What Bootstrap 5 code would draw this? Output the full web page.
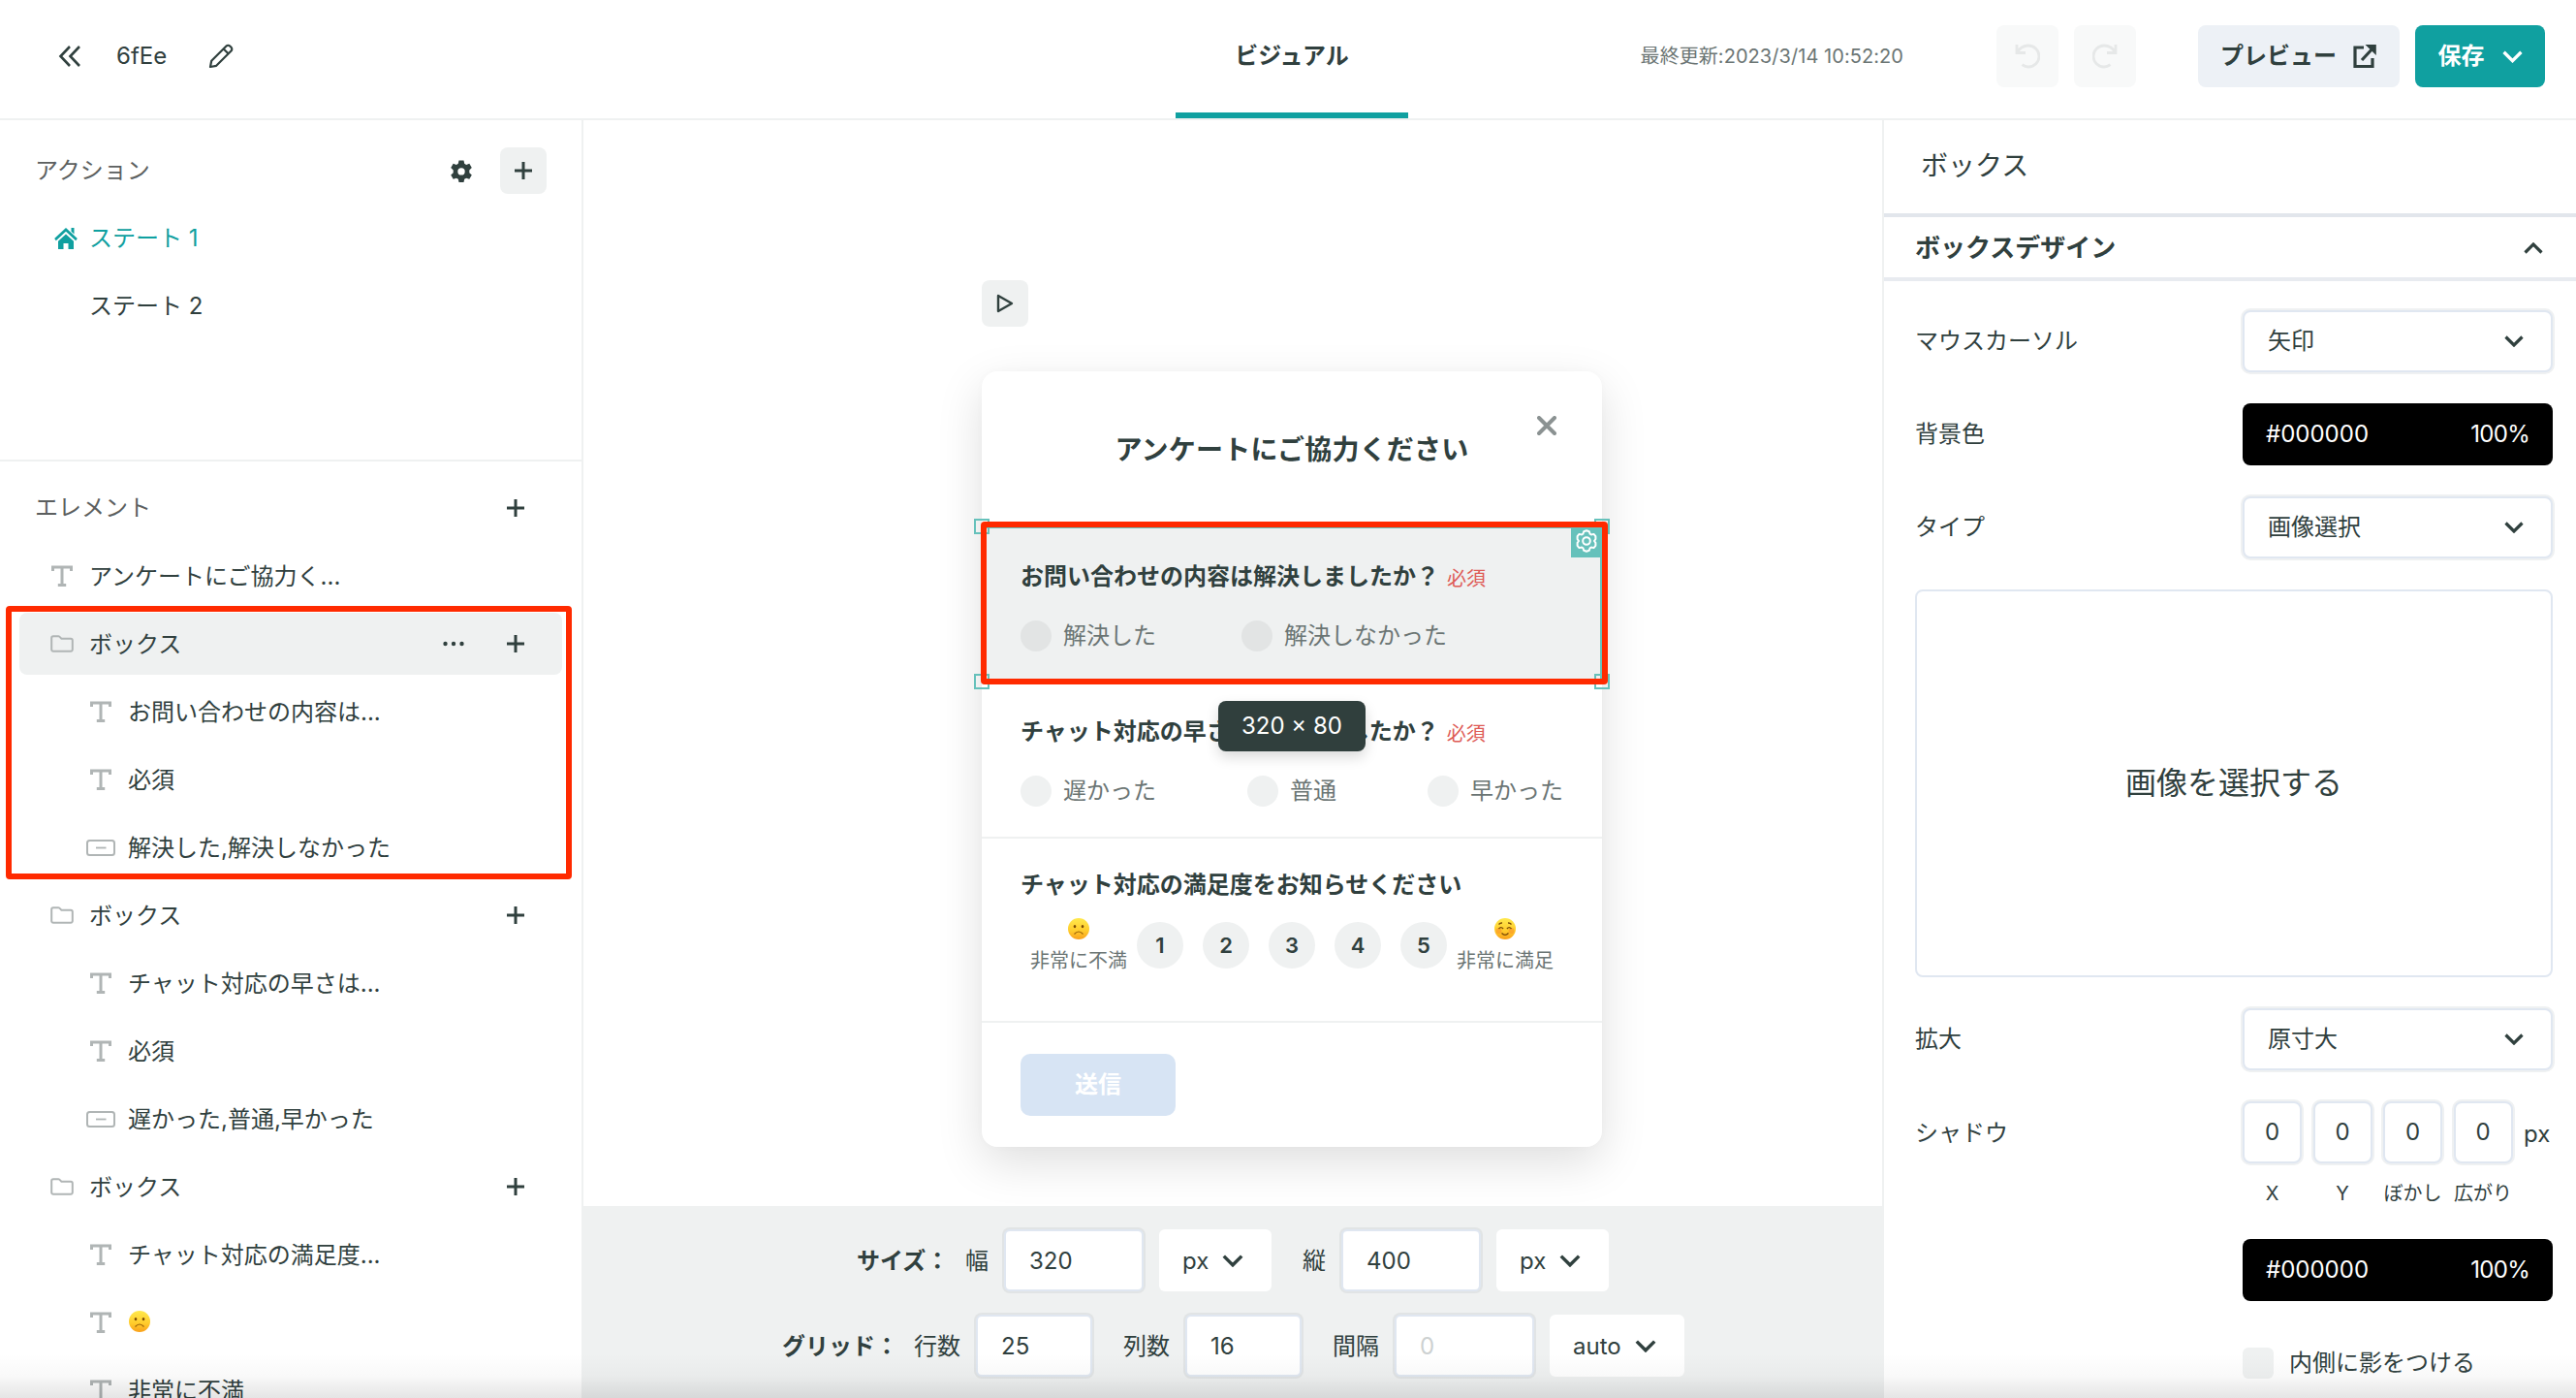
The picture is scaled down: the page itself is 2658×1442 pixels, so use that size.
<!DOCTYPE html>
<html lang="ja">
<head>
<meta charset="utf-8">
<title>ビジュアル</title>
<link href="https://cdn.jsdelivr.net/npm/bootstrap@5.3.0/dist/css/bootstrap.min.css" rel="stylesheet">
<style>
:root{--ink:#30403e;--teal:#10a0a0;--mist:#eff1f1;--sel:#66c1bb;--redline:#ff2a00}
html,body{height:100%}
body{font-family:Inter,"Noto Sans CJK JP",sans-serif;font-size:24px;line-height:36px;color:var(--ink);background:#fff;overflow:hidden}
svg{display:block;flex:none;fill:none;stroke:currentColor}
.app{width:2658px;height:1442px}
.topbar{height:124px;border-bottom:2px solid var(--mist)}
.top-side{width:1213px;height:122px;padding:0 32px 7px 60px}
.tab-on{width:240px;height:122px;padding-bottom:1px;border-bottom:6px solid var(--teal)}
.top-right{height:116px}
.stamp{font-size:20px;color:#6b7574;letter-spacing:.06px}
.sq64{width:64px;height:64px;border-radius:8px;background:#f8f9f9;color:#e6e8e8}
.bt{height:64px;border-radius:8px;border:0;font-size:24px;font-weight:700;padding:0}
.bt-prev,.bt-prev:hover{width:208px;background:#edf1f6;color:var(--ink)}
.bt-save,.bt-save:hover{width:134px;background:var(--teal);color:#fff}
.left{width:602px;border-right:2px solid var(--mist)}
.actions{height:352px;border-bottom:2px solid var(--mist);padding-top:28px}
.hd{height:48px;padding:0 36px 0 36px;color:#5c5f5f}
.sq48{width:48px;height:48px;border-radius:8px;background:var(--mist);color:var(--ink)}
.item{height:64px;margin:0 20px 6px;border-radius:8px;padding:0 39px 0 28px}
.item.on{background:var(--mist)}
.item.sub{padding-left:68px}
.item .ic{width:32px;margin-right:12px;color:#b0b5b5}
.item .tx{position:static;padding-top:1px}
.item.st .tx{padding-top:2px}
.redbox{position:absolute;border:6px solid var(--redline);border-radius:4px;z-index:5}
.rb1{left:6px;top:501px;width:584px;height:282px}
.stage{padding-left:411px;padding-top:165px;height:1120px}
.panelcard{width:640px;height:800px;margin-top:46px;border-radius:16px;background:#fff;box-shadow:0 16px 48px rgba(0,0,0,.13),0 0 8px rgba(0,0,0,.02)}
.pc-title{height:160px;font-size:28px;font-weight:700;letter-spacing:.2px;padding-top:2px}
.pc-sec{padding:0 40px}
.q{font-weight:700;height:36px}
.req{font-size:20px;color:#de5b56;margin-left:8px;padding-top:2px;font-weight:400}
.opt{color:#6b7574;gap:12px;height:36px}
.opt span+span{margin-top:-1px}
.dot{width:32px;height:32px;border-radius:50%;background:var(--mist);flex:none}
.selbox{height:160px;background:var(--mist);border:2px solid var(--sel);position:relative;padding:32px 38px 0}
.selbox .dot{background:#e2e4e4}
.hnd{position:absolute;width:16px;height:16px;border:2px solid var(--sel)}
.gearb{position:absolute;right:-2px;top:-2px;width:32px;height:32px;padding-bottom:2px;background:var(--sel);color:#fff}
.tip{position:absolute;left:244px;top:340px;width:152px;height:52px;border-radius:8px;background:#303f3d;color:#fff;box-shadow:0 6px 14px rgba(0,0,0,.15);z-index:6}
.num{width:48px;height:48px;border-radius:50%;background:var(--mist);font-weight:600;font-size:22px}
.face{width:100px;font-size:20px;line-height:30px;color:#6b7574}
.send{width:160px;height:64px;border-radius:10px;background:#d7e4f4;color:#fff;font-weight:700}
.bottom{background:var(--mist);height:198px;padding-top:24px;gap:24px}
.bl{height:64px}
.bl>b,.bl>.cap{padding-top:1px}
.fld{height:64px;border:2px solid #e0e7f1;border-radius:6px;background:#fff;box-shadow:0 0 0 2px #e1e4e5;padding-left:24px;padding-top:1px}
.pick{height:64px;border-radius:6px;background:#fff;padding-left:24px;padding-top:1px;gap:14px}
.right{width:716px;border-left:2px solid var(--mist)}
.r-title{height:96px;padding:0 0 2px 38px;font-size:28px}
.r-sec{height:70px;border-top:4px solid #e2e6ec;border-bottom:4px solid #e8ebf0;padding:1px 34px 0 32px;font-size:26px;font-weight:700}
.r-body{padding:30px 24px 0 32px;gap:32px}
.r-row{min-height:64px}
.r-row .lb{width:338px;height:64px}
.fx{width:320px}
.rbx{border:2px solid #e0e7f1;border-radius:8px;height:64px;box-shadow:0 0 0 2px #eff1f2;background:#fff}
.blk{height:64px;border-radius:8px;background:#000;color:#fff;padding:0 24px}
.pct{letter-spacing:-.7px}
.drop{height:400px;border:2px solid #e0e7f1;border-radius:8px;font-size:32px}
.n4{width:61px}
.sm{font-size:20px;line-height:30px}
.chk{width:32px;height:32px;border-radius:6px;background:var(--mist)}
.shade{position:absolute;left:0;right:0;bottom:0;height:46px;background:linear-gradient(to bottom,rgba(0,0,0,0),rgba(0,0,0,.025) 50%,rgba(0,0,0,.1));z-index:9}
</style>
</head>
<body>
<svg width="0" height="0" class="position-absolute">
<defs>
<symbol id="tt" viewBox="0 0 22 22"><path d="M1.500 6V2h19v4M11 2v18M6.800 20.400h8.400" stroke-width="3" fill="none"/></symbol>
<symbol id="fo" viewBox="0 0 24 18"><path d="M1.200 3a1.800 1.800 0 0 1 1.800-1.800h5.200c.7 0 1 .3 1.400.7l1.800 1.800h9.600A1.800 1.800 0 0 1 22.800 5.500V15a1.800 1.800 0 0 1-1.800 1.800H3A1.800 1.800 0 0 1 1.200 15z" stroke-width="2" fill="none"/></symbol>
<symbol id="inp" viewBox="0 0 30 17"><rect x="1" y="1" width="28" height="15" rx="2.500" stroke-width="2" fill="none"/><path d="M10 8.500h10.500" stroke-width="1.800"/></symbol>
<symbol id="pl" viewBox="0 0 18 18"><path d="M9 0v18M0 9h18" stroke-width="3"/></symbol>
<symbol id="dn" viewBox="0 0 20 12"><path d="M1.500 1.500L10 10l8.500-8.500" stroke-width="3.200" fill="none"/></symbol>
<symbol id="sad" viewBox="0 0 22 22"><circle cx="11" cy="11" r="11" fill="url(#yg)" stroke="none"/><ellipse cx="7" cy="8.600" rx="1.300" ry="1.700" fill="#7a4a06" stroke="none"/><ellipse cx="15" cy="8.600" rx="1.300" ry="1.700" fill="#7a4a06" stroke="none"/><path d="M6.500 16.500q4.500-5 9 0" stroke="#9a6208" stroke-width="1.200" fill="none"/></symbol>
<symbol id="hap" viewBox="0 0 22 22"><circle cx="11" cy="11" r="11" fill="url(#yg)" stroke="none"/><circle cx="4.500" cy="13" r="3" fill="#f98a2b" opacity=".5" stroke="none"/><circle cx="17.500" cy="13" r="3" fill="#f98a2b" opacity=".5" stroke="none"/><path d="M4.500 11q2.300-2.800 4.600 0M12.900 11q2.300-2.800 4.600 0M7.500 15.500q3.500 3.600 7 0M4.500 6.500q1.500-1.700 3.500-1.500M17.500 6.500q-1.500-1.700-3.500-1.500" stroke="#7a4a06" stroke-width="1.300" fill="none"/></symbol>
<linearGradient id="yg" x1="0" y1="0" x2="0" y2="1"><stop offset="0" stop-color="#ffe94d"/><stop offset=".6" stop-color="#ffcb2b"/><stop offset="1" stop-color="#f9a01b"/></linearGradient>
</defs>
</svg>

<div class="app d-flex flex-column position-relative">
  <header class="topbar d-flex">
    <div class="top-side d-flex align-items-center">
      <svg width="24" height="24" viewBox="0 0 24 24" stroke-width="2.600"><path d="M12 2L2.500 12 12 22M22 2l-9.500 10L22 22"/></svg>
      <span style="margin-left:36px">6fEe</span>
      <svg width="26" height="26" viewBox="0 0 26 26" stroke-width="2.200" stroke-linejoin="round" style="margin-left:43px"><path d="M2 24l1.200-6.200L18.500 2.500a2.600 2.600 0 0 1 3.700 0l1.300 1.300a2.600 2.600 0 0 1 0 3.700L8.200 22.800zM15.700 5.500l4.800 4.800"/></svg>
    </div>
    <div class="tab-on d-flex align-items-center justify-content-center fw-bold">ビジュアル</div>
    <div class="top-right d-flex align-items-center flex-grow-1 justify-content-end" style="padding-right:32px">
      <span class="stamp">最終更新:2023/3/14 10:52:20</span>
      <div class="sq64 d-flex align-items-center justify-content-center" style="margin-left:96px"><svg width="26" height="26" viewBox="0 0 26 26" stroke-width="2.800"><path d="M2 1v8.500h9M2.500 9C5 4.500 9.500 2 14 2a10.800 10.800 0 0 1 0 22c-2.600 0-4.600-.8-6.500-2.300"/></svg></div>
      <div class="sq64 d-flex align-items-center justify-content-center ms-3"><svg width="26" height="26" viewBox="0 0 26 26" stroke-width="2.800"><path d="M24 1v8.500h-9M23.500 9C21 4.500 16.500 2 12 2a10.800 10.800 0 0 0 0 22c2.600 0 4.600-.8 6.500-2.300"/></svg></div>
      <button class="btn bt bt-prev d-flex align-items-center justify-content-center" style="margin-left:64px;gap:16px">プレビュー<svg width="26" height="26" viewBox="0 0 26 26" stroke-width="3.200"><path d="M12 4H3v19.500h18V15M10 17L23 3"/><path d="M15.500 1.800H24V10z" fill="currentColor" stroke-width="1.600"/></svg></button>
      <button class="btn bt bt-save d-flex align-items-center justify-content-center ms-3" style="gap:18px">保存<svg width="21" height="13"><use href="#dn"/></svg></button>
    </div>
  </header>

  <div class="d-flex flex-grow-1">
    <aside class="left position-relative overflow-hidden flex-shrink-0">
      <section class="actions">
        <div class="hd d-flex align-items-center"><span class="me-auto">アクション</span>
          <svg width="24" height="24" viewBox="0 0 24 24" style="margin:2px 28px 0 0;color:#30403e"><path fill="currentColor" stroke="none" fill-rule="evenodd" d="M9.500.5h5l.7 3.300 1.900 1.100 3.200-1.100 2.500 4.300-2.500 2.300v2.800l2.500 2.300-2.500 4.300-3.200-1.100-1.900 1.100-.7 3.300h-5l-.7-3.300-1.900-1.100-3.200 1.100L1.200 15.500l2.500-2.300v-2.800L1.200 8.100l2.500-4.300 3.200 1.100 1.900-1.100zM12 8.200a3.700 3.700 0 1 0 0 7.400 3.700 3.700 0 0 0 0-7.400z"/></svg>
          <span class="sq48 d-flex align-items-center justify-content-center"><svg width="18" height="18"><use href="#pl"/></svg></span></div>
        <div class="item st d-flex align-items-center" style="margin-top:13px;color:#10a0a0"><span class="ic d-flex justify-content-center" style="color:inherit;padding-left:8px"><svg width="24" height="22" viewBox="0 0 24 20" preserveAspectRatio="none" style="margin-top:2px"><path d="M1 11L12 1.800 23 11" stroke-width="2.600"/><path d="M17.500 0h3v6l-3-2.500zM12 5.800l8 6.700V20h-5.500v-5.500h-5V20H4v-7.500z" fill="currentColor" stroke="none"/></svg></span><span class="tx">ステート 1</span></div>
        <div class="item st d-flex align-items-center"><span class="ic"></span><span class="tx">ステート 2</span></div>
      </section>
      <section>
        <div class="hd d-flex align-items-center" style="margin-top:24px;padding-right:59px"><span class="me-auto">エレメント</span><svg width="18" height="18" style="color:#30403e"><use href="#pl"/></svg></div>
        <div class="item d-flex align-items-center" style="margin-top:14px"><span class="ic d-flex justify-content-center"><svg width="22" height="22"><use href="#tt"/></svg></span><span class="tx">アンケートにご協力く...</span></div>

        <div class="item on d-flex align-items-center"><span class="ic d-flex justify-content-center"><svg width="24" height="18"><use href="#fo"/></svg></span><span class="tx me-auto">ボックス</span><svg width="22" height="6" viewBox="0 0 22 6" style="margin-right:44px"><g fill="#30403e" stroke="none"><circle cx="2.500" cy="3" r="2.200"/><circle cx="11" cy="3" r="2.200"/><circle cx="19.500" cy="3" r="2.200"/></g></svg><svg width="18" height="18"><use href="#pl"/></svg></div>
        <div class="item sub d-flex align-items-center"><span class="ic d-flex justify-content-center"><svg width="22" height="22"><use href="#tt"/></svg></span><span class="tx">お問い合わせの内容は...</span></div>
        <div class="item sub d-flex align-items-center"><span class="ic d-flex justify-content-center"><svg width="22" height="22"><use href="#tt"/></svg></span><span class="tx">必須</span></div>
        <div class="item sub d-flex align-items-center"><span class="ic d-flex justify-content-center"><svg width="30" height="17"><use href="#inp"/></svg></span><span class="tx">解決した,解決しなかった</span></div>

        <div class="item d-flex align-items-center"><span class="ic d-flex justify-content-center"><svg width="24" height="18"><use href="#fo"/></svg></span><span class="tx me-auto">ボックス</span><svg width="18" height="18"><use href="#pl"/></svg></div>
        <div class="item sub d-flex align-items-center"><span class="ic d-flex justify-content-center"><svg width="22" height="22"><use href="#tt"/></svg></span><span class="tx">チャット対応の早さは...</span></div>
        <div class="item sub d-flex align-items-center"><span class="ic d-flex justify-content-center"><svg width="22" height="22"><use href="#tt"/></svg></span><span class="tx">必須</span></div>
        <div class="item sub d-flex align-items-center"><span class="ic d-flex justify-content-center"><svg width="30" height="17"><use href="#inp"/></svg></span><span class="tx">遅かった,普通,早かった</span></div>

        <div class="item d-flex align-items-center"><span class="ic d-flex justify-content-center"><svg width="24" height="18"><use href="#fo"/></svg></span><span class="tx me-auto">ボックス</span><svg width="18" height="18"><use href="#pl"/></svg></div>
        <div class="item sub d-flex align-items-center"><span class="ic d-flex justify-content-center"><svg width="22" height="22"><use href="#tt"/></svg></span><span class="tx">チャット対応の満足度...</span></div>
        <div class="item sub d-flex align-items-center"><span class="ic d-flex justify-content-center"><svg width="22" height="22"><use href="#tt"/></svg></span><svg width="22" height="22" style="margin:-2px 0 0 1px"><use href="#sad"/></svg></div>
        <div class="item sub d-flex align-items-center"><span class="ic d-flex justify-content-center"><svg width="22" height="22"><use href="#tt"/></svg></span><span class="tx">非常に不満</span></div>
      </section>
      <div class="redbox rb1"></div>
    </aside>

    <main class="flex-grow-1 d-flex flex-column">
      <div class="stage">
        <span class="sq48 d-flex align-items-center justify-content-center"><svg width="18" height="20" viewBox="0 0 18 20" stroke-width="2.400" stroke-linejoin="round"><path d="M2 2l14 8-14 8z"/></svg></span>
        <div class="panelcard position-relative">
          <div class="pc-title d-flex align-items-center justify-content-center">アンケートにご協力ください</div>
          <svg class="position-absolute" style="right:47px;top:46px;color:#8b9292" width="20" height="20" viewBox="0 0 20 20" stroke-width="4" stroke-linecap="round"><path d="M2 2l16 16M18 2L2 18"/></svg>
          <div class="selbox">
            <div class="d-flex q">お問い合わせの内容は解決しましたか？<span class="req">必須</span></div>
            <div class="d-flex" style="margin-top:25px">
              <div class="opt d-flex align-items-center" style="width:228px"><span class="dot"></span><span>解決した</span></div>
              <div class="opt d-flex align-items-center"><span class="dot"></span><span>解決しなかった</span></div>
            </div>
            <span class="hnd" style="left:-10px;top:-10px"></span><span class="hnd" style="right:-10px;top:-10px"></span>
            <span class="hnd" style="left:-10px;bottom:-10px"></span><span class="hnd" style="right:-10px;bottom:-10px"></span>
            <span class="gearb d-flex align-items-center justify-content-center"><svg width="24" height="24" viewBox="0 0 24 24" stroke-width="2" stroke-linejoin="round"><path d="M12 1.200l2.800 1 .8 2.500 1.300.8 2.600-.6 1.900 2.300v2.900L20 12l1.400 1.900v2.900l-1.900 2.300-2.600-.6-1.300.8-.8 2.500-2.800 1-2.800-1-.8-2.500-1.300-.8-2.600.6-1.900-2.300v-2.900L4 12l-1.400-1.900V7.200l1.900-2.300 2.600.6 1.300-.8.800-2.500z"/><circle cx="12" cy="12" r="3.800"/></svg></span>
            <div class="redbox" style="left:-3px;top:-7px;width:647px;height:168px"></div>
          </div>
          <div class="pc-sec" style="height:162px;padding-top:34px;border-bottom:2px solid #eff1f1">
            <div class="d-flex q">チャット対応の早さはいかがでしたか？<span class="req">必須</span></div>
            <div class="d-flex justify-content-between" style="margin-top:25px">
              <div class="opt d-flex align-items-center"><span class="dot"></span><span>遅かった</span></div>
              <div class="opt d-flex align-items-center"><span class="dot"></span><span>普通</span></div>
              <div class="opt d-flex align-items-center"><span class="dot"></span><span>早かった</span></div>
            </div>
          </div>
          <div class="tip d-flex align-items-center justify-content-center">320 × 80</div>
          <div class="pc-sec" style="height:190px;padding-top:30px;border-bottom:2px solid #eff1f1">
            <div class="q">チャット対応の満足度をお知らせください</div>
            <div class="d-flex justify-content-center" style="margin-top:16px;gap:10px">
              <div class="face d-flex flex-column align-items-center"><svg width="22" height="22"><use href="#sad"/></svg><span style="margin-top:7px">非常に不満</span></div>
              <div class="d-flex" style="gap:20px;margin-top:4px">
                <span class="num d-flex align-items-center justify-content-center">1</span><span class="num d-flex align-items-center justify-content-center">2</span><span class="num d-flex align-items-center justify-content-center">3</span><span class="num d-flex align-items-center justify-content-center">4</span><span class="num d-flex align-items-center justify-content-center">5</span>
              </div>
              <div class="face d-flex flex-column align-items-center"><svg width="22" height="22"><use href="#hap"/></svg><span style="margin-top:7px">非常に満足</span></div>
            </div>
          </div>
          <div class="pc-sec" style="padding-top:32px"><div class="send d-flex align-items-center justify-content-center">送信</div></div>
        </div>
      </div>
      <div class="bottom d-flex flex-column">
        <div class="bl d-flex align-items-center" style="padding-left:282px">
          <b style="width:112px">サイズ：</b><span class="cap" style="width:40px">幅</span>
          <span class="fld d-flex align-items-center" style="width:144px">320</span>
          <span class="pick d-flex align-items-center ms-3" style="width:116px">px<svg width="22" height="13"><use href="#dn"/></svg></span>
          <span class="cap" style="margin-left:32px;width:40px">縦</span>
          <span class="fld d-flex align-items-center" style="width:144px">400</span>
          <span class="pick d-flex align-items-center ms-3" style="width:116px">px<svg width="22" height="13"><use href="#dn"/></svg></span>
        </div>
        <div class="bl d-flex align-items-center" style="padding-left:205px">
          <b style="width:136px">グリッド：</b><span class="cap" style="width:64px">行数</span>
          <span class="fld d-flex align-items-center" style="width:120px">25</span>
          <span class="cap" style="margin-left:32px;width:64px">列数</span>
          <span class="fld d-flex align-items-center" style="width:120px">16</span>
          <span class="cap" style="margin-left:32px;width:64px">間隔</span>
          <span class="fld d-flex align-items-center" style="width:144px;color:#cdd1d1">0</span>
          <span class="pick d-flex align-items-center ms-3" style="width:139px">auto<svg width="22" height="13"><use href="#dn"/></svg></span>
        </div>
      </div>
    </main>

    <aside class="right flex-shrink-0">
      <div class="r-title d-flex align-items-center">ボックス</div>
      <div class="r-sec d-flex align-items-center justify-content-between"><span>ボックスデザイン</span><svg width="20" height="12" style="transform:rotate(180deg)"><use href="#dn"/></svg></div>
      <div class="r-body d-flex flex-column">
        <div class="r-row d-flex"><span class="lb d-flex align-items-center">マウスカーソル</span><div class="fx rbx d-flex align-items-center justify-content-between" style="padding:0 28px 0 24px">矢印<svg width="20" height="12"><use href="#dn"/></svg></div></div>
        <div class="r-row d-flex"><span class="lb d-flex align-items-center">背景色</span><div class="fx blk d-flex align-items-center justify-content-between"><span>#000000</span><span class="pct">100%</span></div></div>
        <div class="r-row d-flex"><span class="lb d-flex align-items-center">タイプ</span><div class="fx rbx d-flex align-items-center justify-content-between" style="padding:0 28px 0 24px">画像選択<svg width="20" height="12"><use href="#dn"/></svg></div></div>
        <div class="drop d-flex align-items-center justify-content-center">画像を選択する</div>
        <div class="r-row d-flex"><span class="lb d-flex align-items-center">拡大</span><div class="fx rbx d-flex align-items-center justify-content-between" style="padding:0 28px 0 24px">原寸大<svg width="20" height="12"><use href="#dn"/></svg></div></div>
        <div class="r-row d-flex"><span class="lb d-flex align-items-center" style="padding-top:2px">シャドウ</span>
          <div class="fx">
            <div class="d-flex align-items-center" style="gap:11.500px"><span class="rbx n4 d-flex align-items-center justify-content-center">0</span><span class="rbx n4 d-flex align-items-center justify-content-center">0</span><span class="rbx n4 d-flex align-items-center justify-content-center">0</span><span class="rbx n4 d-flex align-items-center justify-content-center">0</span><span style="padding-top:3px">px</span></div>
            <div class="sm d-flex text-nowrap" style="gap:11.500px;margin-top:16px"><span class="n4 d-flex justify-content-center">X</span><span class="n4 d-flex justify-content-center">Y</span><span class="n4 d-flex justify-content-center">ぼかし</span><span class="n4 d-flex justify-content-center">広がり</span></div>
            <div class="blk d-flex align-items-center justify-content-between" style="margin-top:32px"><span>#000000</span><span class="pct">100%</span></div>
            <div class="d-flex align-items-center" style="margin-top:46px;gap:16px"><span class="chk"></span>内側に影をつける</div>
          </div>
        </div>
      </div>
    </aside>
  </div>
  <div class="shade"></div>
</div>
<script src="https://cdn.jsdelivr.net/npm/bootstrap@5.3.0/dist/js/bootstrap.bundle.min.js"></script>
</body>
</html>
